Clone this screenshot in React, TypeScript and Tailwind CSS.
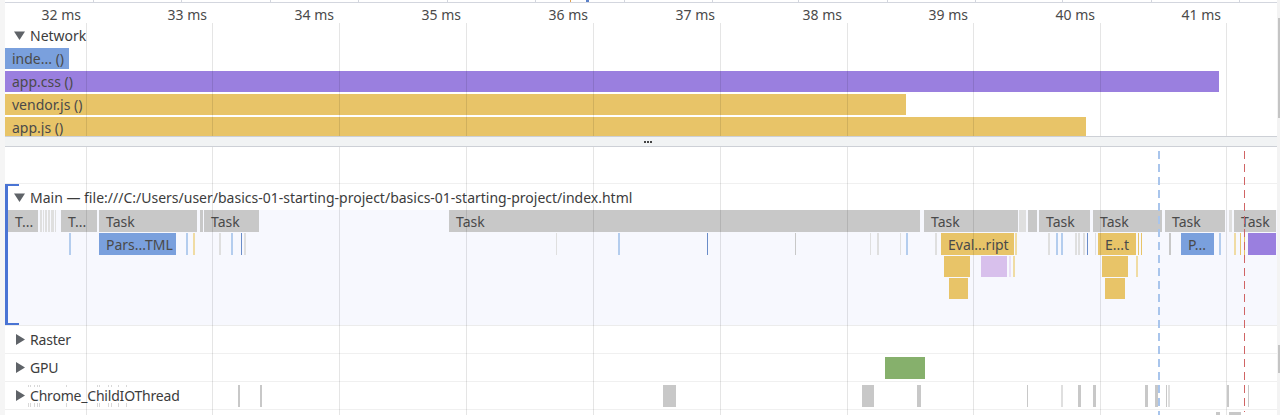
const gridLines = [86, 212, 339, 466, 593, 720, 847, 973, 1100, 1226];
const timeLabels = ["32 ms", "33 ms", "34 ms", "35 ms", "36 ms", "37 ms", "38 ms", "39 ms", "40 ms", "41 ms"];
const topTicks = [93, 181, 270, 358, 447, 535, 624, 712, 798, 887, 975, 1062, 1151, 1239];

type Bar = { x: number; w: number; c: string; label?: string };

const GREY = "#c8c8c8";
const PALE = "#dfdfdf";
const BLUE = "#7aa0dd";
const SKY = "#b4cdee";
const NAVY = "#6a8cc8";
const YELLOW = "#e8c468";
const CREAM = "#f0dca4";
const PURPLE = "#9a7fdf";
const LILAC = "#d8c0ec";

const networkRows: Bar[] = [
  { x: 5, w: 64, c: BLUE, label: "inde... ()" },
  { x: 5, w: 1214, c: PURPLE, label: "app.css ()" },
  { x: 5, w: 901, c: YELLOW, label: "vendor.js ()" },
  { x: 5, w: 1081, c: YELLOW, label: "app.js ()" },
];

const taskRow: Bar[] = [
  { x: 8, w: 30, c: GREY, label: "T..." },
  { x: 40, w: 2, c: PALE },
  { x: 43, w: 1, c: PALE },
  { x: 45, w: 2, c: PALE },
  { x: 48, w: 2, c: PALE },
  { x: 51, w: 3, c: PALE },
  { x: 55, w: 1, c: PALE },
  { x: 61, w: 36, c: GREY, label: "T..." },
  { x: 99, w: 98, c: GREY, label: "Task" },
  { x: 200, w: 3, c: GREY },
  { x: 204, w: 55, c: GREY, label: "Task" },
  { x: 449, w: 471, c: GREY, label: "Task" },
  { x: 924, w: 94, c: GREY, label: "Task" },
  { x: 1019, w: 7, c: PALE },
  { x: 1028, w: 9, c: GREY },
  { x: 1039, w: 51, c: GREY, label: "Task" },
  { x: 1093, w: 69, c: GREY, label: "Task" },
  { x: 1165, w: 60, c: GREY, label: "Task" },
  { x: 1229, w: 3, c: PALE },
  { x: 1234, w: 42, c: GREY, label: "Task" },
];

const eventRow: Bar[] = [
  { x: 69, w: 2, c: SKY },
  { x: 99, w: 77, c: BLUE, label: "Pars...TML" },
  { x: 186, w: 2, c: SKY },
  { x: 193, w: 2, c: CREAM },
  { x: 219, w: 2, c: PALE },
  { x: 231, w: 2, c: SKY },
  { x: 241, w: 1, c: NAVY },
  { x: 244, w: 2, c: PALE },
  { x: 556, w: 1, c: PALE },
  { x: 618, w: 2, c: SKY },
  { x: 707, w: 1, c: NAVY },
  { x: 795, w: 1, c: GREY },
  { x: 870, w: 1, c: PALE },
  { x: 877, w: 2, c: PALE },
  { x: 900, w: 1, c: PALE },
  { x: 906, w: 2, c: SKY },
  { x: 935, w: 2, c: PALE },
  { x: 941, w: 73, c: YELLOW, label: "Eval...ript" },
  { x: 1015, w: 2, c: CREAM },
  { x: 1048, w: 2, c: PALE },
  { x: 1056, w: 2, c: SKY },
  { x: 1061, w: 2, c: SKY },
  { x: 1075, w: 2, c: PALE },
  { x: 1078, w: 2, c: PALE },
  { x: 1083, w: 2, c: PALE },
  { x: 1087, w: 1, c: NAVY },
  { x: 1095, w: 1, c: PALE },
  { x: 1098, w: 38, c: YELLOW, label: "E...t" },
  { x: 1138, w: 1, c: YELLOW },
  { x: 1141, w: 1, c: YELLOW },
  { x: 1169, w: 2, c: GREY },
  { x: 1181, w: 33, c: BLUE, label: "P..." },
  { x: 1219, w: 2, c: SKY },
  { x: 1234, w: 2, c: CREAM },
  { x: 1240, w: 1, c: YELLOW },
  { x: 1244, w: 1, c: YELLOW },
  { x: 1248, w: 28, c: PURPLE },
];

const callRow: Bar[] = [
  { x: 944, w: 26, c: YELLOW },
  { x: 981, w: 26, c: LILAC },
  { x: 1009, w: 2, c: "#eadff5" },
  { x: 1013, w: 2, c: CREAM },
  { x: 1102, w: 26, c: YELLOW },
  { x: 1136, w: 2, c: CREAM },
];

const nestedRow: Bar[] = [
  { x: 949, w: 19, c: YELLOW },
  { x: 1105, w: 20, c: YELLOW },
];

const ioRow: Bar[] = [
  { x: 238, w: 2, c: GREY },
  { x: 260, w: 2, c: GREY },
  { x: 663, w: 13, c: GREY },
  { x: 862, w: 12, c: GREY },
  { x: 917, w: 4, c: GREY },
  { x: 1027, w: 1, c: GREY },
  { x: 1061, w: 2, c: PALE },
  { x: 1078, w: 3, c: GREY },
  { x: 1093, w: 3, c: GREY },
  { x: 1145, w: 3, c: GREY },
  { x: 1155, w: 3, c: GREY },
  { x: 1166, w: 1, c: GREY },
  { x: 1168, w: 2, c: PALE },
  { x: 1227, w: 2, c: GREY },
  { x: 1248, w: 1, c: GREY },
];

const ioTicks = [28, 30, 34, 37, 39, 66, 97, 99, 108, 111, 118, 126];

function Bars({ bars, height = "h-[22px]" }: { bars: Bar[]; height?: string }) {
  return (
    <div className={`relative ${height}`}>
      {bars.map((b, i) => (
        <div
          key={i}
          className="absolute top-0 bottom-0 flex items-center overflow-hidden whitespace-nowrap text-[14px] text-[#4a4a4a]"
          style={{ left: b.x, width: b.w, backgroundColor: b.c, paddingLeft: b.label ? 7 : 0 }}
        >
          {b.label}
        </div>
      ))}
    </div>
  );
}

function Arrow({ open }: { open?: boolean }) {
  return (
    <svg width="11" height="11" viewBox="0 0 11 11" className="shrink-0 fill-[#5f6368]">
      {open ? <path d="M0 1.5h11L5.5 10z" /> : <path d="M1 0l9 5.5L1 11z" />}
    </svg>
  );
}

function GridLines({ from = 0 }: { from?: number }) {
  return (
    <>
      {gridLines.map((x) => (
        <div
          key={x}
          className="pointer-events-none absolute bottom-0 w-px bg-black/10"
          style={{ left: x, top: from }}
        />
      ))}
    </>
  );
}

function CollapsedTrack({ name, children }: { name: string; children?: React.ReactNode }) {
  return (
    <div className="relative h-[28px] border-b border-[#f0f0f0]">
      {children}
      <div className="absolute left-[15px] top-[5px] flex h-[16px] items-center gap-[4px] bg-white text-[14px] tracking-[-0.2px] text-[#3c3c3c]">
        <Arrow />
        <span className="pr-px">{name}</span>
      </div>
    </div>
  );
}

export default function App() {
  return (
    <div className="relative flex h-[415px] w-[1280px] flex-col overflow-hidden bg-white font-['Noto_Sans','Open_Sans',sans-serif]">
      {/* overview strip */}
      <div className="relative h-[3px] shrink-0 border-b border-[#d3d6de]">
        {topTicks.map((x) => (
          <div key={x} className="absolute top-0 h-[2px] w-px bg-[#d3d6de]" style={{ left: x }} />
        ))}
        <div className="absolute left-[570px] top-0 h-[2px] w-px bg-[#e0a050]" />
        <div className="absolute left-[586px] top-0 h-[2px] w-[3px] bg-[#5a80c8]" />
      </div>

      {/* network section */}
      <div className="relative h-[133px] shrink-0 overflow-hidden">
        <div className="h-[20px] text-[14px] leading-[24px] text-[#4a4a4a]">
          {timeLabels.map((t, i) => {
            const left = i === 0 ? 5 : gridLines[i - 1] + 1;
            return (
              <div
                key={t}
                className="absolute whitespace-nowrap pr-[5px] text-right"
                style={{ left, width: gridLines[i] - left }}
              >
                {t}
              </div>
            );
          })}
        </div>
        <div className="flex h-[25px] items-center gap-[5px] pl-[14px] text-[14px] text-[#3c3c3c]">
          <Arrow open />
          <span>Network</span>
        </div>
        <div className="flex flex-col gap-[2px]">
          {networkRows.map((row) => (
            <Bars key={row.label} bars={[row]} height="h-[21px]" />
          ))}
        </div>
        <GridLines from={20} />
      </div>

      {/* splitter */}
      <div className="flex h-[11px] shrink-0 items-center justify-center border-y border-[#cdd0d6] bg-[#f1f3f4] pl-[16px]">
        <span className="flex gap-px">
          <i className="h-[2px] w-[2px] bg-[#444]" />
          <i className="h-[2px] w-[2px] bg-[#444]" />
          <i className="h-[2px] w-[2px] bg-[#444]" />
        </span>
      </div>

      {/* threads */}
      <div className="relative flex min-h-0 flex-1 flex-col">
        <div className="h-[37px] shrink-0 border-b border-[#f0f0f0]" />

        <div className="relative h-[142px] shrink-0 border-b border-[#ececec] bg-[#f7f8fe]">
          <div className="flex h-[26px] items-center gap-[5px] bg-white pl-[14px] text-[14px] text-[#3c3c3c]">
            <Arrow open />
            <span>Main — file:///C:/Users/user/basics-01-starting-project/basics-01-starting-project/index.html</span>
          </div>
          <Bars bars={taskRow} height="h-[22px] mb-px" />
          <Bars bars={eventRow} height="h-[22px] mb-px" />
          <Bars bars={callRow} height="h-[21px] mb-px" />
          <Bars bars={nestedRow} height="h-[21px]" />
          <div className="absolute left-[5px] top-0 h-[141px] w-[14px] border-y-2 border-l-[3px] border-[#4a74d4] [border-right:none]" />
        </div>

        <CollapsedTrack name="Raster" />
        <CollapsedTrack name="GPU">
          <div className="absolute left-[885px] top-[3px] h-[22px] w-[40px] bg-[#86b06c]" />
        </CollapsedTrack>
        <CollapsedTrack name="Chrome_ChildIOThread">
          <div className="absolute inset-x-0 top-[3px]">
            {ioTicks.map((x) => (
              <div key={x} className="absolute h-[22px] w-px bg-[#d8d8d8]" style={{ left: x }} />
            ))}
            <Bars bars={ioRow} />
          </div>
        </CollapsedTrack>
        <div className="relative flex-1">
          <div className="absolute left-[1216px] top-[2px] h-[4px] w-[4px] bg-[#c8c8c8]" />
          <div className="absolute left-[1229px] top-[2px] h-[4px] w-[12px] bg-[#c8c8c8]" />
        </div>

        <GridLines />

        {/* frame markers */}
        <div className="absolute bottom-0 left-[1158px] top-[4px] w-[2px] bg-[repeating-linear-gradient(to_bottom,#a9c5ec_0,#a9c5ec_8px,transparent_8px,transparent_13px)]" />
        <div className="absolute bottom-[3px] left-[1244px] top-[4px] w-px bg-[repeating-linear-gradient(to_bottom,#d06464_0,#d06464_8px,transparent_8px,transparent_13px)]" />
      </div>

      {/* side gutters and scrollbars */}
      <div className="absolute bottom-0 left-0 top-0 w-[5px] bg-[#f5f5f5]" />
      <div className="absolute bottom-0 right-0 top-0 w-[3px] bg-[#f3f3f3]" />
      <div className="absolute right-0 top-[18px] h-[100px] w-[2px] bg-[#c4c4c4]" />
      <div className="absolute right-0 top-[345px] h-[28px] w-[2px] bg-[#c4c4c4]" />
    </div>
  );
}
